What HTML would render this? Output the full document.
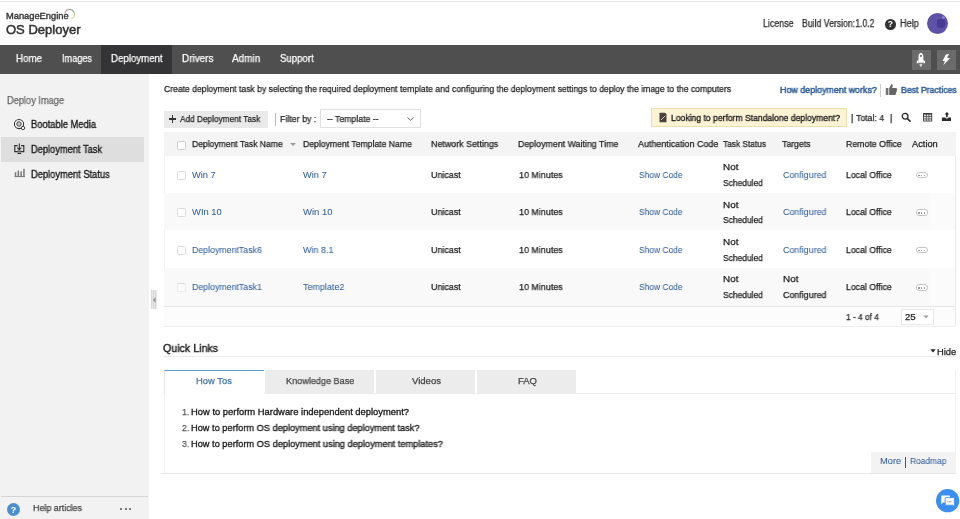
<!DOCTYPE html><html><head><meta charset="utf-8"><style>
html,body{margin:0;padding:0;width:960px;height:519px;overflow:hidden;background:#fff;font-family:"Liberation Sans",sans-serif}
.t{position:absolute;white-space:nowrap;line-height:1;word-spacing:0;-webkit-text-stroke:0.25px currentColor;will-change:transform}
.a{position:absolute}
</style></head><body>
<!-- top line -->
<div class="a" style="left:0;top:1px;width:960px;height:1px;background:#e4e4e4"></div>
<!-- logo arc -->
<svg class="a" style="left:56px;top:6px" width="24" height="16" viewBox="0 0 24 16">
<path d="M8.79 7.27 A4.9 4.9 0 0 1 11.92 3.60" stroke="#d49aaa" stroke-width="1.2" fill="none"/>
<path d="M11.92 3.60 A4.9 4.9 0 0 1 16.05 3.96" stroke="#a9a3a8" stroke-width="1.2" fill="none"/>
<path d="M16.05 3.96 A4.9 4.9 0 0 1 18.20 6.52" stroke="#7fb39a" stroke-width="1.2" fill="none"/>
<path d="M18.20 6.52 A4.9 4.9 0 0 1 18.26 9.71" stroke="#b9c98a" stroke-width="1.2" fill="none"/>
<path d="M18.26 9.71 A4.9 4.9 0 0 1 14.95 12.91" stroke="#e6dca0" stroke-width="1.2" fill="none"/>
</svg>
<!-- help icon -->
<div class="a" style="left:884.8px;top:19.3px;width:10.6px;height:10.6px;border-radius:50%;background:#333;color:#fff;font-size:8.5px;font-weight:700;line-height:10.6px;text-align:center;will-change:transform">?</div>
<!-- avatar -->
<div class="a" style="left:926.8px;top:13.3px;width:21.2px;height:21px;border-radius:50%;background:#5d52a8;overflow:hidden">
  <div class="a" style="left:10px;top:5.5px;width:8.5px;height:9.5px;border-radius:3px 2px 4px 3px;background:#463b90"></div>
  <div class="a" style="left:15px;top:3px;width:3px;height:3px;border-radius:50%;background:#8a80cc"></div>
</div>
<!-- nav -->
<div class="a" style="left:0;top:45px;width:960px;height:29px;background:#4f4f50"></div>
<div class="a" style="left:101px;top:45px;width:71px;height:29px;background:#343436"></div>
<div class="a" style="left:912px;top:50px;width:18.5px;height:19.7px;background:#6b6b6b"></div>
<div class="a" style="left:937px;top:50px;width:19px;height:19.7px;background:#6b6b6b"></div>
<svg class="a" style="left:912px;top:50px" width="19" height="20" viewBox="0 0 19 20">
 <path d="M6.5 12.8 L6.5 6.5 C6.5 4.5 7.6 3.2 8.9 2.8 C10.2 3.2 11.35 4.5 11.35 6.5 L11.35 12.8 Z" fill="#fff"/>
 <path d="M6.6 9.7 L4.9 11 L4.7 13.6 L6.6 13 Z M11.25 9.7 L12.95 11 L13.15 13.6 L11.25 13 Z" fill="#fff"/>
 <circle cx="8.9" cy="5.9" r="1.1" fill="#777"/>
 <path d="M7.3 13.8 L10.5 13.8 L9.8 16.2 L8.9 16.9 L8 16.2 Z" fill="#d0d0d0"/>
</svg>
<svg class="a" style="left:937px;top:50px" width="19" height="20" viewBox="0 0 19 20">
 <path d="M8.9 4.4 L12.2 4 L9.9 7.7 L13 8.2 L6.3 15.3 L7.9 11.2 L5.6 10.7 Z" fill="#fff"/>
</svg>
<!-- sidebar -->
<div class="a" style="left:0;top:74px;width:148.5px;height:445px;background:#f2f2f2"></div>
<div class="a" style="left:1px;top:137px;width:143px;height:25px;background:#dedede"></div>
<div class="a" style="left:1px;top:496px;width:147px;height:1px;background:#d6d6d6"></div>
<!-- sidebar icons -->
<svg class="a" style="left:13px;top:118px" width="13" height="13" viewBox="0 0 13 13">
 <circle cx="6" cy="6" r="4.6" stroke="#333" stroke-width="1.05" fill="none"/>
 <circle cx="6" cy="6" r="2.2" stroke="#3a3a3a" stroke-width="1" fill="none"/>
 <circle cx="6" cy="6" r="0.7" fill="#555"/>
 <circle cx="10" cy="10" r="1.7" fill="#f2f2f2" stroke="#333" stroke-width="0.9"/>
</svg>
<svg class="a" style="left:13px;top:142px" width="13" height="13" viewBox="0 0 13 13">
 <path d="M4.5 3.6 L1.8 3.6 L1.8 9.6 L10.8 9.6 L10.8 3.6 L8.1 3.6" stroke="#2a2a2a" stroke-width="1.1" fill="none"/>
 <path d="M6.3 1.5 L6.3 7.3" stroke="#2a2a2a" stroke-width="1.1"/>
 <path d="M4.3 5.6 L6.3 7.8 L8.3 5.6" stroke="#2a2a2a" stroke-width="1.1" fill="none"/>
 <path d="M4.3 8.2 L8.3 8.2 L8.3 9.6 L4.3 9.6 Z" fill="#888"/>
 <path d="M4.5 11.4 L8.1 11.4" stroke="#2a2a2a" stroke-width="1.2"/>
</svg>
<svg class="a" style="left:14px;top:167px" width="12" height="12" viewBox="0 0 12 12">
 <path d="M0.5 9.6 L11 9.6" stroke="#777" stroke-width="1"/>
 <rect x="0.8" y="5.2" width="1.5" height="4.4" fill="#777"/>
 <rect x="3.6" y="3.6" width="1.5" height="6" fill="#777"/>
 <rect x="6.4" y="4.4" width="1.5" height="5.2" fill="#777"/>
 <rect x="9.2" y="1.8" width="1.5" height="7.8" fill="#777"/>
</svg>
<!-- help circle bottom -->
<div class="a" style="left:6.7px;top:502.6px;width:13px;height:13px;border-radius:50%;background:#4a8fd0;color:#fff;font-size:9.5px;font-weight:700;line-height:13px;text-align:center;will-change:transform">?</div>
<div class="a" style="left:120px;top:507.7px;width:2.2px;height:2.2px;border-radius:50%;background:#555"></div>
<div class="a" style="left:124.6px;top:507.7px;width:2.2px;height:2.2px;border-radius:50%;background:#555"></div>
<div class="a" style="left:129.2px;top:507.7px;width:2.2px;height:2.2px;border-radius:50%;background:#555"></div>
<!-- best practices thumbs -->
<svg class="a" style="left:885px;top:83px" width="13" height="13" viewBox="0 0 13 13">
 <rect x="0.8" y="5" width="2.6" height="7" fill="#737373"/>
 <path d="M4.2 5.2 L6.5 1 C7.6 1 8 2 7.6 3.5 L7.1 5 L11 5 C12 5 12.4 6 12 7 L10.8 11.2 C10.6 11.8 10.2 12 9.6 12 L4.2 12 Z" fill="#666"/>
</svg>
<div class="a" style="left:880px;top:84px;width:1px;height:12.5px;background:#cfcfcf"></div>
<!-- add button -->
<div class="a" style="left:164px;top:111.3px;width:103.5px;height:16.4px;background:#e9e9e9"></div>
<div class="a" style="left:169.2px;top:118.4px;width:7.2px;height:1.2px;background:#333"></div>
<div class="a" style="left:172.2px;top:115.4px;width:1.2px;height:7.2px;background:#333"></div>
<div class="a" style="left:275px;top:113px;width:1px;height:13px;background:#bbb"></div>
<!-- template dropdown -->
<div class="a" style="left:320px;top:109px;width:98.5px;height:16.6px;border:1px solid #e0e0e0;background:#fff"></div>
<svg class="a" style="left:406px;top:116px" width="9" height="6" viewBox="0 0 9 6">
 <path d="M1.5 1.5 L4.5 4.3 L7.5 1.5" stroke="#666" stroke-width="1" fill="none"/>
</svg>
<!-- standalone yellow -->
<div class="a" style="left:650.8px;top:108px;width:194px;height:16.8px;background:#fcf3d5;border:1px solid #eadfb2"></div>
<svg class="a" style="left:658px;top:112px" width="10" height="11" viewBox="0 0 10 11">
 <path d="M1.5 0.8 L7 0.8 L8.5 2.3 L8.5 10.2 L1.5 10.2 Z" fill="#4a4040"/>
 <path d="M3 8 L7.2 3.8" stroke="#cfc4b8" stroke-width="1"/>
</svg>
<!-- search/grid/export -->
<svg class="a" style="left:900px;top:111px" width="12" height="12" viewBox="0 0 12 12">
 <circle cx="5.1" cy="5.3" r="2.85" stroke="#2a2a2a" stroke-width="1.3" fill="none"/>
 <path d="M7.3 7.5 L10 10.2" stroke="#2a2a2a" stroke-width="1.7" stroke-linecap="round"/>
</svg>
<svg class="a" style="left:923px;top:113px" width="10" height="9" viewBox="0 0 10 9">
 <rect x="0" y="0" width="9.2" height="8.4" fill="#3a3a3a" rx="0.5"/>
 <rect x="0.9" y="1.6" width="2" height="1.7" fill="#e6e6e6"/><rect x="3.6" y="1.6" width="2" height="1.7" fill="#e6e6e6"/><rect x="6.3" y="1.6" width="2" height="1.7" fill="#e6e6e6"/>
 <rect x="0.9" y="4" width="2" height="1.6" fill="#e6e6e6"/><rect x="3.6" y="4" width="2" height="1.6" fill="#e6e6e6"/><rect x="6.3" y="4" width="2" height="1.6" fill="#e6e6e6"/>
 <rect x="0.9" y="6.3" width="2" height="1.4" fill="#e6e6e6"/><rect x="3.6" y="6.3" width="2" height="1.4" fill="#e6e6e6"/><rect x="6.3" y="6.3" width="2" height="1.4" fill="#e6e6e6"/>
</svg>
<svg class="a" style="left:941px;top:111px" width="12" height="11" viewBox="0 0 12 11">
 <path d="M5.9 1 L3.6 3.4 L5.1 3.4 L5.1 6.2 L6.7 6.2 L6.7 3.4 L8.2 3.4 Z" fill="#222"/>
 <path d="M0.9 6.6 L4.3 6.6 L5.9 8 L7.5 6.6 L10 6.6 L10 10 L0.9 10 Z" fill="#2a2a2a"/>
</svg>
<!-- table -->
<div class="a" style="left:164px;top:132px;width:790px;height:194px;border-left:1px solid #f0f0f0;border-right:1px solid #e8e8e8"></div>
<div class="a" style="left:164px;top:132px;width:791.5px;height:23.7px;background:#f4f4f5"></div>
<div class="a" style="left:164px;top:192.5px;width:765px;height:37.5px;background:#f9f9f9"></div>
<div class="a" style="left:164px;top:267.7px;width:765px;height:38.8px;background:#f9f9f9"></div>
<div class="a" style="left:164px;top:307px;width:791px;height:18.5px;background:#fcfcfc"></div><div class="a" style="left:164px;top:306px;width:791px;height:1px;background:#e6e6e6"></div>
<div class="a" style="left:164px;top:325.5px;width:791px;height:1px;background:#eeeeee"></div>
<!-- checkboxes -->
<div class="a" style="left:176.5px;top:140.5px;width:7px;height:7px;border:1px solid #ccc;border-radius:1.5px;background:#fff"></div>
<div class="a" style="left:176.5px;top:170.7px;width:7px;height:7px;border:1px solid #dcdcdc;border-radius:1.5px;background:#fff"></div>
<div class="a" style="left:176.5px;top:208.2px;width:7px;height:7px;border:1px solid #dcdcdc;border-radius:1.5px;background:#fff"></div>
<div class="a" style="left:176.5px;top:245.7px;width:7px;height:7px;border:1px solid #dcdcdc;border-radius:1.5px;background:#fff"></div>
<div class="a" style="left:176.5px;top:283.2px;width:7px;height:7px;border:1px solid #ececec;border-top-color:#dcdcdc;border-radius:1.5px;background:#fafafa"></div>
<!-- sort arrow -->
<svg class="a" style="left:289px;top:142px" width="8" height="5" viewBox="0 0 8 5"><path d="M1 1 L7 1 L4 4 Z" fill="#999"/></svg>
<!-- action buttons -->
<div class="a" style="left:915.5px;top:171.7px;width:10.2px;height:4.6px;border:1px solid #c4c4c4;border-radius:3px;background:#fff"></div>
<div class="a" style="left:918.1px;top:174.6px;width:1.6px;height:1.6px;border-radius:50%;background:#8a8a8a"></div>
<div class="a" style="left:920.9px;top:174.6px;width:1.6px;height:1.6px;border-radius:50%;background:#8a8a8a"></div>
<div class="a" style="left:923.7px;top:174.6px;width:1.6px;height:1.6px;border-radius:50%;background:#8a8a8a"></div>
<div class="a" style="left:915.5px;top:209.2px;width:10.2px;height:4.6px;border:1px solid #c4c4c4;border-radius:3px;background:#fff"></div>
<div class="a" style="left:918.1px;top:212.1px;width:1.6px;height:1.6px;border-radius:50%;background:#8a8a8a"></div>
<div class="a" style="left:920.9px;top:212.1px;width:1.6px;height:1.6px;border-radius:50%;background:#8a8a8a"></div>
<div class="a" style="left:923.7px;top:212.1px;width:1.6px;height:1.6px;border-radius:50%;background:#8a8a8a"></div>
<div class="a" style="left:915.5px;top:246.7px;width:10.2px;height:4.6px;border:1px solid #c4c4c4;border-radius:3px;background:#fff"></div>
<div class="a" style="left:918.1px;top:249.6px;width:1.6px;height:1.6px;border-radius:50%;background:#8a8a8a"></div>
<div class="a" style="left:920.9px;top:249.6px;width:1.6px;height:1.6px;border-radius:50%;background:#8a8a8a"></div>
<div class="a" style="left:923.7px;top:249.6px;width:1.6px;height:1.6px;border-radius:50%;background:#8a8a8a"></div>
<div class="a" style="left:915.5px;top:284.2px;width:10.2px;height:4.6px;border:1px solid #c4c4c4;border-radius:3px;background:#fff"></div>
<div class="a" style="left:918.1px;top:287.1px;width:1.6px;height:1.6px;border-radius:50%;background:#8a8a8a"></div>
<div class="a" style="left:920.9px;top:287.1px;width:1.6px;height:1.6px;border-radius:50%;background:#8a8a8a"></div>
<div class="a" style="left:923.7px;top:287.1px;width:1.6px;height:1.6px;border-radius:50%;background:#8a8a8a"></div>
<div class="a" style="left:929px;top:192.5px;width:26px;height:37.5px;background:#fbfbfb"></div>
<div class="a" style="left:929px;top:267.7px;width:26px;height:38.8px;background:#fbfbfb"></div>
<!-- pagination dropdown -->
<div class="a" style="left:900.6px;top:309.2px;width:31.4px;height:13.6px;border:1px solid #e8e8e8;background:#fff"></div>
<svg class="a" style="left:923px;top:315px" width="6" height="4" viewBox="0 0 6 4"><path d="M0.5 0.5 L5.5 0.5 L3 3.5 Z" fill="#999"/></svg>
<!-- collapse handle -->
<div class="a" style="left:151px;top:290.2px;width:5.8px;height:19.3px;background:repeating-linear-gradient(90deg,#d8d8d8 0 1px,#e8e8e8 1px 2px)"></div>
<svg class="a" style="left:151px;top:296px" width="6" height="8" viewBox="0 0 6 8"><path d="M4.6 1.2 L1.6 4 L4.6 6.8 Z" fill="#9a9a9a"/></svg>
<!-- quick links -->
<div class="a" style="left:164px;top:356px;width:792px;height:1px;background:#ececec"></div>
<svg class="a" style="left:930px;top:349px" width="6" height="4" viewBox="0 0 6 4"><path d="M0.3 0.3 L5.7 0.3 L3 3.5 Z" fill="#222"/></svg>
<div class="a" style="left:161px;top:370px;width:794px;height:103px;border-right:1px solid #f0f0f0;border-bottom:1px solid #e8e8e8"></div>
<div class="a" style="left:164px;top:393px;width:791px;height:1px;background:#ececec"></div>
<div class="a" style="left:164px;top:393px;width:1px;height:80px;background:#f0f0f0"></div>
<div class="a" style="left:164px;top:370px;width:99.5px;height:23.5px;background:#fff;border-top:1.6px solid #5b9bd0;border-left:1px solid #e6e6e6;box-sizing:border-box"></div>
<div class="a" style="left:265px;top:370px;width:109px;height:23px;background:#ececec"></div>
<div class="a" style="left:376px;top:370px;width:99px;height:23px;background:#ececec"></div>
<div class="a" style="left:477px;top:370px;width:99px;height:23px;background:#ececec"></div>
<div class="a" style="left:871.2px;top:451.9px;width:84.5px;height:21.3px;background:#f3f3f3"></div>
<div class="a" style="left:905px;top:456.5px;width:1.4px;height:11px;background:#555"></div>
<!-- chat bubble -->
<svg class="a" style="left:936px;top:489px" width="24" height="24" viewBox="0 0 24 24">
 <circle cx="11.6" cy="11.7" r="11.6" fill="#3d8ef2"/>
 <path d="M5.6 6.6 L13.6 6.6 Q14 6.6 14 7 L14 13.2 Q14 13.6 13.6 13.6 L7.2 13.6 L5.2 15.2 L5.2 7 Q5.2 6.6 5.6 6.6 Z" fill="#fff"/>
 <path d="M9.8 8.6 L17.8 8.6 Q18.4 8.6 18.4 9.2 L18.4 17.6 L16.6 16.2 L9.8 16.2 Q9.2 16.2 9.2 15.6 L9.2 9.2 Q9.2 8.6 9.8 8.6 Z" fill="#fff" stroke="#3d8ef2" stroke-width="0.9"/>
 <circle cx="11.9" cy="12.8" r="0.5" fill="#555"/><circle cx="13.4" cy="12.8" r="0.5" fill="#555"/><circle cx="14.9" cy="12.8" r="0.5" fill="#555"/>
</svg>

<div class="t" style="left:6.10px;top:12.00px;font-size:8.8px;color:#333;font-weight:400;letter-spacing:0.000px;transform:scaleX(1.0577);transform-origin:0 0;-webkit-text-stroke:0.35px #333">ManageEngine</div>
<div class="t" style="left:6.10px;top:24.00px;font-size:12.6px;color:#333;font-weight:400;letter-spacing:0.000px;transform:scaleX(1.0332);transform-origin:0 0;-webkit-text-stroke:0.5px #333">OS Deployer</div>
<div class="t" style="left:763.10px;top:19.00px;font-size:10px;color:#2a2a2a;font-weight:400;letter-spacing:0.000px;transform:scaleX(0.8849);transform-origin:0 0;">License</div>
<div class="t" style="left:802.00px;top:19.00px;font-size:10px;color:#2a2a2a;font-weight:400;letter-spacing:0.000px;transform:scaleX(0.8694);transform-origin:0 0;">Build Version:1.0.2</div>
<div class="t" style="left:899.50px;top:19.00px;font-size:10px;color:#2a2a2a;font-weight:400;letter-spacing:0.000px;transform:scaleX(0.9136);transform-origin:0 0;">Help</div>
<div class="t" style="left:16.20px;top:54.00px;font-size:10.3px;color:#ffffff;font-weight:400;letter-spacing:0.000px;transform:scaleX(0.9465);transform-origin:0 0;">Home</div>
<div class="t" style="left:61.50px;top:54.00px;font-size:10.3px;color:#ffffff;font-weight:400;letter-spacing:0.000px;transform:scaleX(0.8881);transform-origin:0 0;">Images</div>
<div class="t" style="left:110.90px;top:54.00px;font-size:10.3px;color:#ffffff;font-weight:400;letter-spacing:0.000px;transform:scaleX(0.9390);transform-origin:0 0;">Deployment</div>
<div class="t" style="left:181.80px;top:54.00px;font-size:10.3px;color:#ffffff;font-weight:400;letter-spacing:0.000px;transform:scaleX(0.9629);transform-origin:0 0;">Drivers</div>
<div class="t" style="left:232.20px;top:54.00px;font-size:10.3px;color:#ffffff;font-weight:400;letter-spacing:0.000px;transform:scaleX(0.9696);transform-origin:0 0;">Admin</div>
<div class="t" style="left:279.50px;top:54.00px;font-size:10.3px;color:#ffffff;font-weight:400;letter-spacing:0.000px;transform:scaleX(0.9341);transform-origin:0 0;">Support</div>
<div class="t" style="left:6.50px;top:96.00px;font-size:10px;color:#666;font-weight:400;letter-spacing:0.000px;transform:scaleX(0.9238);transform-origin:0 0;">Deploy Image</div>
<div class="t" style="left:30.50px;top:120.00px;font-size:10px;color:#1a1a1a;font-weight:400;letter-spacing:0.000px;transform:scaleX(0.9353);transform-origin:0 0;-webkit-text-stroke:0.35px #1a1a1a">Bootable Media</div>
<div class="t" style="left:30.50px;top:145.00px;font-size:10px;color:#1a1a1a;font-weight:400;letter-spacing:0.000px;transform:scaleX(0.9277);transform-origin:0 0;-webkit-text-stroke:0.35px #1a1a1a">Deployment Task</div>
<div class="t" style="left:30.50px;top:170.00px;font-size:10px;color:#1a1a1a;font-weight:400;letter-spacing:0.000px;transform:scaleX(0.9314);transform-origin:0 0;-webkit-text-stroke:0.35px #1a1a1a">Deployment Status</div>
<div class="t" style="left:32.50px;top:504.00px;font-size:9.25px;color:#444;font-weight:400;letter-spacing:0.000px;transform:scaleX(0.9626);transform-origin:0 0;">Help articles</div>
<div class="t" style="left:163.50px;top:85.00px;font-size:9.25px;color:#1c1c1c;font-weight:400;letter-spacing:0.000px;transform:scaleX(0.9290);transform-origin:0 0;">Create deployment task by selecting the required deployment template and configuring the deployment settings to deploy the image to the computers</div>
<div class="t" style="left:779.50px;top:86.00px;font-size:9.2px;color:#34609a;font-weight:400;letter-spacing:0.000px;transform:scaleX(0.9671);transform-origin:0 0;-webkit-text-stroke:0.5px #34609a">How deployment works?</div>
<div class="t" style="left:900.50px;top:86.00px;font-size:9.2px;color:#34609a;font-weight:400;letter-spacing:0.000px;transform:scaleX(0.9503);transform-origin:0 0;-webkit-text-stroke:0.5px #34609a">Best Practices</div>
<div class="t" style="left:180.10px;top:115.00px;font-size:9.25px;color:#242424;font-weight:400;letter-spacing:0.000px;transform:scaleX(0.8930);transform-origin:0 0;">Add Deployment Task</div>
<div class="t" style="left:279.50px;top:115.00px;font-size:9.25px;color:#242424;font-weight:400;letter-spacing:0.000px;transform:scaleX(0.9541);transform-origin:0 0;">Filter by :</div>
<div class="t" style="left:327.00px;top:115.00px;font-size:9.25px;color:#242424;font-weight:400;letter-spacing:0.000px;transform:scaleX(0.9393);transform-origin:0 0;">-- Template --</div>
<div class="t" style="left:670.80px;top:114.00px;font-size:9.25px;color:#1e1e1e;font-weight:400;letter-spacing:0.000px;transform:scaleX(0.9283);transform-origin:0 0;-webkit-text-stroke:0.35px #1e1e1e">Looking to perform Standalone deployment?</div>
<div class="t" style="left:850.80px;top:114.00px;font-size:9.25px;color:#242424;font-weight:400;letter-spacing:0.000px;">|</div>
<div class="t" style="left:855.50px;top:114.00px;font-size:9.25px;color:#242424;font-weight:400;letter-spacing:0.000px;transform:scaleX(0.9387);transform-origin:0 0;">Total: 4</div>
<div class="t" style="left:890.30px;top:114.00px;font-size:9.25px;color:#242424;font-weight:400;letter-spacing:0.000px;">|</div>
<div class="t" style="left:192.20px;top:140.00px;font-size:9.25px;color:#1c1c1c;font-weight:400;letter-spacing:0.000px;transform:scaleX(0.9242);transform-origin:0 0;">Deployment Task Name</div>
<div class="t" style="left:302.50px;top:140.00px;font-size:9.25px;color:#1c1c1c;font-weight:400;letter-spacing:0.000px;transform:scaleX(0.9335);transform-origin:0 0;">Deployment Template Name</div>
<div class="t" style="left:431.30px;top:140.00px;font-size:9.25px;color:#1c1c1c;font-weight:400;letter-spacing:0.000px;transform:scaleX(0.9611);transform-origin:0 0;">Network Settings</div>
<div class="t" style="left:518.25px;top:140.00px;font-size:9.25px;color:#1c1c1c;font-weight:400;letter-spacing:0.000px;transform:scaleX(0.9543);transform-origin:0 0;">Deployment Waiting Time</div>
<div class="t" style="left:638.25px;top:140.00px;font-size:9.25px;color:#1c1c1c;font-weight:400;letter-spacing:0.000px;transform:scaleX(0.9632);transform-origin:0 0;">Authentication Code</div>
<div class="t" style="left:722.50px;top:140.00px;font-size:9.25px;color:#1c1c1c;font-weight:400;letter-spacing:0.000px;transform:scaleX(0.8991);transform-origin:0 0;">Task Status</div>
<div class="t" style="left:782.00px;top:140.00px;font-size:9.25px;color:#1c1c1c;font-weight:400;letter-spacing:0.000px;transform:scaleX(0.9392);transform-origin:0 0;">Targets</div>
<div class="t" style="left:845.50px;top:140.00px;font-size:9.25px;color:#1c1c1c;font-weight:400;letter-spacing:0.000px;transform:scaleX(0.9457);transform-origin:0 0;">Remote Office</div>
<div class="t" style="left:911.50px;top:140.00px;font-size:9.25px;color:#1c1c1c;font-weight:400;letter-spacing:0.000px;transform:scaleX(1.0012);transform-origin:0 0;">Action</div>
<div class="t" style="left:192.30px;top:171.00px;font-size:9.25px;color:#34609a;font-weight:400;letter-spacing:0.000px;transform:scaleX(1.0061);transform-origin:0 0;-webkit-text-stroke:0.05px #34609a">Win 7</div>
<div class="t" style="left:302.50px;top:171.00px;font-size:9.25px;color:#34609a;font-weight:400;letter-spacing:0.000px;transform:scaleX(0.9976);transform-origin:0 0;-webkit-text-stroke:0.05px #34609a">Win 7</div>
<div class="t" style="left:431.40px;top:171.00px;font-size:9.25px;color:#1c1c1c;font-weight:400;letter-spacing:0.000px;transform:scaleX(0.9624);transform-origin:0 0;">Unicast</div>
<div class="t" style="left:518.90px;top:171.00px;font-size:9.25px;color:#1c1c1c;font-weight:400;letter-spacing:0.000px;transform:scaleX(0.9680);transform-origin:0 0;">10 Minutes</div>
<div class="t" style="left:638.90px;top:171.00px;font-size:9.25px;color:#34609a;font-weight:400;letter-spacing:0.000px;transform:scaleX(0.9095);transform-origin:0 0;-webkit-text-stroke:0.05px #34609a">Show Code</div>
<div class="t" style="left:723.10px;top:163.00px;font-size:9.25px;color:#1c1c1c;font-weight:400;letter-spacing:0.000px;transform:scaleX(1.0690);transform-origin:0 0;">Not</div>
<div class="t" style="left:723.10px;top:179.00px;font-size:9.25px;color:#1c1c1c;font-weight:400;letter-spacing:0.000px;transform:scaleX(0.9127);transform-origin:0 0;">Scheduled</div>
<div class="t" style="left:782.50px;top:171.00px;font-size:9.25px;color:#34609a;font-weight:400;letter-spacing:0.000px;transform:scaleX(0.9610);transform-origin:0 0;-webkit-text-stroke:0.05px #34609a">Configured</div>
<div class="t" style="left:846.40px;top:171.00px;font-size:9.25px;color:#1c1c1c;font-weight:400;letter-spacing:0.000px;transform:scaleX(0.9386);transform-origin:0 0;">Local Office</div>
<div class="t" style="left:192.30px;top:208.00px;font-size:9.25px;color:#34609a;font-weight:400;letter-spacing:0.000px;transform:scaleX(1.0166);transform-origin:0 0;-webkit-text-stroke:0.05px #34609a">WIn 10</div>
<div class="t" style="left:302.50px;top:208.00px;font-size:9.25px;color:#34609a;font-weight:400;letter-spacing:0.000px;transform:scaleX(1.0279);transform-origin:0 0;-webkit-text-stroke:0.05px #34609a">Win 10</div>
<div class="t" style="left:431.40px;top:208.00px;font-size:9.25px;color:#1c1c1c;font-weight:400;letter-spacing:0.000px;transform:scaleX(0.9624);transform-origin:0 0;">Unicast</div>
<div class="t" style="left:518.90px;top:208.00px;font-size:9.25px;color:#1c1c1c;font-weight:400;letter-spacing:0.000px;transform:scaleX(0.9680);transform-origin:0 0;">10 Minutes</div>
<div class="t" style="left:638.90px;top:208.00px;font-size:9.25px;color:#34609a;font-weight:400;letter-spacing:0.000px;transform:scaleX(0.9095);transform-origin:0 0;-webkit-text-stroke:0.05px #34609a">Show Code</div>
<div class="t" style="left:723.10px;top:201.00px;font-size:9.25px;color:#1c1c1c;font-weight:400;letter-spacing:0.000px;transform:scaleX(1.0690);transform-origin:0 0;">Not</div>
<div class="t" style="left:723.10px;top:216.00px;font-size:9.25px;color:#1c1c1c;font-weight:400;letter-spacing:0.000px;transform:scaleX(0.9127);transform-origin:0 0;">Scheduled</div>
<div class="t" style="left:782.50px;top:208.00px;font-size:9.25px;color:#34609a;font-weight:400;letter-spacing:0.000px;transform:scaleX(0.9610);transform-origin:0 0;-webkit-text-stroke:0.05px #34609a">Configured</div>
<div class="t" style="left:846.40px;top:208.00px;font-size:9.25px;color:#1c1c1c;font-weight:400;letter-spacing:0.000px;transform:scaleX(0.9386);transform-origin:0 0;">Local Office</div>
<div class="t" style="left:192.30px;top:246.00px;font-size:9.25px;color:#34609a;font-weight:400;letter-spacing:0.000px;transform:scaleX(0.9493);transform-origin:0 0;-webkit-text-stroke:0.05px #34609a">DeploymentTask6</div>
<div class="t" style="left:302.50px;top:246.00px;font-size:9.25px;color:#34609a;font-weight:400;letter-spacing:0.000px;transform:scaleX(0.9726);transform-origin:0 0;-webkit-text-stroke:0.05px #34609a">Win 8.1</div>
<div class="t" style="left:431.40px;top:246.00px;font-size:9.25px;color:#1c1c1c;font-weight:400;letter-spacing:0.000px;transform:scaleX(0.9624);transform-origin:0 0;">Unicast</div>
<div class="t" style="left:518.90px;top:246.00px;font-size:9.25px;color:#1c1c1c;font-weight:400;letter-spacing:0.000px;transform:scaleX(0.9680);transform-origin:0 0;">10 Minutes</div>
<div class="t" style="left:638.90px;top:246.00px;font-size:9.25px;color:#34609a;font-weight:400;letter-spacing:0.000px;transform:scaleX(0.9095);transform-origin:0 0;-webkit-text-stroke:0.05px #34609a">Show Code</div>
<div class="t" style="left:723.10px;top:238.00px;font-size:9.25px;color:#1c1c1c;font-weight:400;letter-spacing:0.000px;transform:scaleX(1.0690);transform-origin:0 0;">Not</div>
<div class="t" style="left:723.10px;top:254.00px;font-size:9.25px;color:#1c1c1c;font-weight:400;letter-spacing:0.000px;transform:scaleX(0.9127);transform-origin:0 0;">Scheduled</div>
<div class="t" style="left:782.50px;top:246.00px;font-size:9.25px;color:#34609a;font-weight:400;letter-spacing:0.000px;transform:scaleX(0.9610);transform-origin:0 0;-webkit-text-stroke:0.05px #34609a">Configured</div>
<div class="t" style="left:846.40px;top:246.00px;font-size:9.25px;color:#1c1c1c;font-weight:400;letter-spacing:0.000px;transform:scaleX(0.9386);transform-origin:0 0;">Local Office</div>
<div class="t" style="left:192.30px;top:283.00px;font-size:9.25px;color:#34609a;font-weight:400;letter-spacing:0.000px;transform:scaleX(0.9493);transform-origin:0 0;-webkit-text-stroke:0.05px #34609a">DeploymentTask1</div>
<div class="t" style="left:302.50px;top:283.00px;font-size:9.25px;color:#34609a;font-weight:400;letter-spacing:0.000px;transform:scaleX(0.9698);transform-origin:0 0;-webkit-text-stroke:0.05px #34609a">Template2</div>
<div class="t" style="left:431.40px;top:283.00px;font-size:9.25px;color:#1c1c1c;font-weight:400;letter-spacing:0.000px;transform:scaleX(0.9624);transform-origin:0 0;">Unicast</div>
<div class="t" style="left:518.90px;top:283.00px;font-size:9.25px;color:#1c1c1c;font-weight:400;letter-spacing:0.000px;transform:scaleX(0.9680);transform-origin:0 0;">10 Minutes</div>
<div class="t" style="left:638.90px;top:283.00px;font-size:9.25px;color:#34609a;font-weight:400;letter-spacing:0.000px;transform:scaleX(0.9095);transform-origin:0 0;-webkit-text-stroke:0.05px #34609a">Show Code</div>
<div class="t" style="left:723.10px;top:275.00px;font-size:9.25px;color:#1c1c1c;font-weight:400;letter-spacing:0.000px;transform:scaleX(1.0690);transform-origin:0 0;">Not</div>
<div class="t" style="left:723.10px;top:291.00px;font-size:9.25px;color:#1c1c1c;font-weight:400;letter-spacing:0.000px;transform:scaleX(0.9127);transform-origin:0 0;">Scheduled</div>
<div class="t" style="left:782.50px;top:275.00px;font-size:9.25px;color:#1c1c1c;font-weight:400;letter-spacing:0.000px;transform:scaleX(1.0690);transform-origin:0 0;">Not</div>
<div class="t" style="left:782.50px;top:291.00px;font-size:9.25px;color:#1c1c1c;font-weight:400;letter-spacing:0.000px;transform:scaleX(0.9610);transform-origin:0 0;">Configured</div>
<div class="t" style="left:846.40px;top:283.00px;font-size:9.25px;color:#1c1c1c;font-weight:400;letter-spacing:0.000px;transform:scaleX(0.9386);transform-origin:0 0;">Local Office</div>
<div class="t" style="left:846.10px;top:313.00px;font-size:9.25px;color:#242424;font-weight:400;letter-spacing:0.000px;transform:scaleX(0.9010);transform-origin:0 0;">1 - 4 of 4</div>
<div class="t" style="left:904.50px;top:313.00px;font-size:9.25px;color:#242424;font-weight:400;letter-spacing:0.000px;transform:scaleX(1.0392);transform-origin:0 0;">25</div>
<div class="t" style="left:163.20px;top:343.00px;font-size:11px;color:#1c1c1c;font-weight:400;letter-spacing:0.000px;transform:scaleX(0.9691);transform-origin:0 0;-webkit-text-stroke:0.4px #1c1c1c">Quick Links</div>
<div class="t" style="left:937.20px;top:348.00px;font-size:9.25px;color:#1c1c1c;font-weight:400;letter-spacing:0.000px;transform:scaleX(1.0141);transform-origin:0 0;">Hide</div>
<div class="t" style="left:195.50px;top:377.00px;font-size:9.25px;color:#4577ad;font-weight:400;letter-spacing:0.000px;transform:scaleX(1.0195);transform-origin:0 0;">How Tos</div>
<div class="t" style="left:286.00px;top:377.00px;font-size:9.25px;color:#444;font-weight:400;letter-spacing:0.000px;transform:scaleX(0.9836);transform-origin:0 0;">Knowledge Base</div>
<div class="t" style="left:411.50px;top:377.00px;font-size:9.25px;color:#444;font-weight:400;letter-spacing:0.000px;transform:scaleX(1.0311);transform-origin:0 0;">Videos</div>
<div class="t" style="left:517.50px;top:377.00px;font-size:9.25px;color:#444;font-weight:400;letter-spacing:0.000px;transform:scaleX(1.0262);transform-origin:0 0;">FAQ</div>
<div class="t" style="left:182.30px;top:408.00px;font-size:9.25px;color:#555;font-weight:400;letter-spacing:0.000px;transform:scaleX(0.9328);transform-origin:0 0;">1.</div>
<div class="t" style="left:191.40px;top:408.00px;font-size:9.25px;color:#1a1a1a;font-weight:400;letter-spacing:0.000px;transform:scaleX(1.0147);transform-origin:0 0;-webkit-text-stroke:0.32px #1a1a1a">How to perform Hardware independent deployment?</div>
<div class="t" style="left:182.30px;top:424.00px;font-size:9.25px;color:#555;font-weight:400;letter-spacing:0.000px;transform:scaleX(0.9328);transform-origin:0 0;">2.</div>
<div class="t" style="left:191.40px;top:424.00px;font-size:9.25px;color:#1a1a1a;font-weight:400;letter-spacing:0.000px;transform:scaleX(0.9965);transform-origin:0 0;-webkit-text-stroke:0.32px #1a1a1a">How to perform OS deployment using deployment task?</div>
<div class="t" style="left:182.30px;top:440.00px;font-size:9.25px;color:#555;font-weight:400;letter-spacing:0.000px;transform:scaleX(0.9328);transform-origin:0 0;">3.</div>
<div class="t" style="left:191.40px;top:440.00px;font-size:9.25px;color:#1a1a1a;font-weight:400;letter-spacing:0.000px;transform:scaleX(0.9978);transform-origin:0 0;-webkit-text-stroke:0.32px #1a1a1a">How to perform OS deployment using deployment templates?</div>
<div class="t" style="left:879.80px;top:457.00px;font-size:9.25px;color:#34609a;font-weight:400;letter-spacing:0.000px;transform:scaleX(1.0105);transform-origin:0 0;-webkit-text-stroke:0.05px #34609a">More</div>
<div class="t" style="left:910.30px;top:457.00px;font-size:9.25px;color:#34609a;font-weight:400;letter-spacing:0.000px;transform:scaleX(0.9075);transform-origin:0 0;-webkit-text-stroke:0.05px #34609a">Roadmap</div>
</body></html>
